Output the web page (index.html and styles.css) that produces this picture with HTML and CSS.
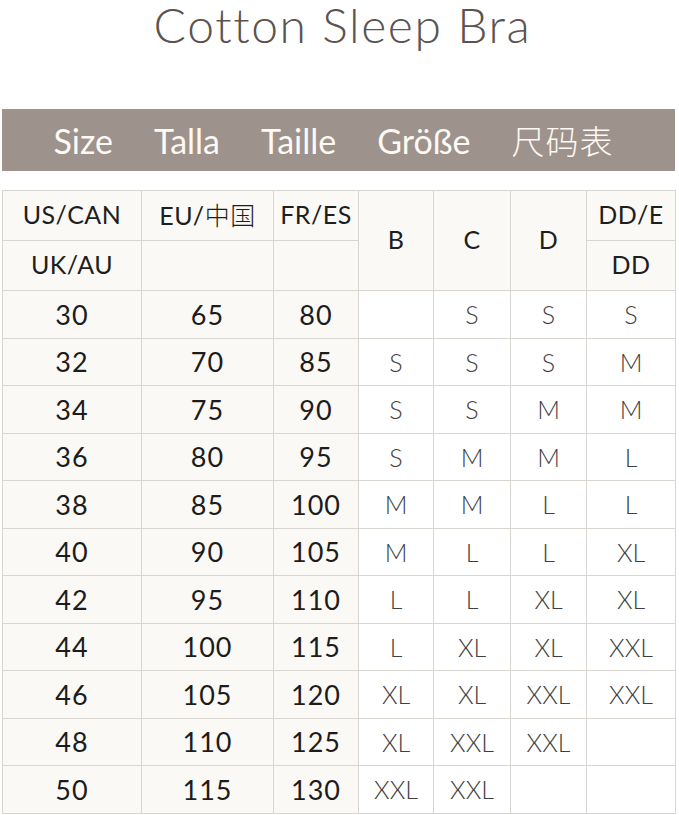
FILE: index.html
```html
<!DOCTYPE html>
<html>
<head>
<meta charset="utf-8">
<link rel="stylesheet" href="styles.css">
</head>
<body>
<div class="page">
  <h1 class="title">Cotton Sleep Bra</h1>
  <div class="banner">
    <span>Size</span><span>Talla</span><span>Taille</span><span>Größe</span><span class="cjk">尺码表</span>
  </div>
  <table class="chart">
    <colgroup>
      <col class="c1"><col class="c2"><col class="c3"><col class="c4"><col class="c5"><col class="c6"><col class="c7">
    </colgroup>
    <thead>
      <tr class="h">
        <th>US/CAN</th><th>EU/<span class="cjk">中国</span></th><th>FR/ES</th>
        <th rowspan="2">B</th><th rowspan="2">C</th><th rowspan="2">D</th><th>DD/E</th>
      </tr>
      <tr class="h">
        <th>UK/AU</th><th></th><th></th><th>DD</th>
      </tr>
    </thead>
    <tbody>
      <tr><td class="n">30</td><td class="n">65</td><td class="n">80</td><td></td><td>S</td><td>S</td><td>S</td></tr>
      <tr><td class="n">32</td><td class="n">70</td><td class="n">85</td><td>S</td><td>S</td><td>S</td><td>M</td></tr>
      <tr><td class="n">34</td><td class="n">75</td><td class="n">90</td><td>S</td><td>S</td><td>M</td><td>M</td></tr>
      <tr><td class="n">36</td><td class="n">80</td><td class="n">95</td><td>S</td><td>M</td><td>M</td><td>L</td></tr>
      <tr><td class="n">38</td><td class="n">85</td><td class="n">100</td><td>M</td><td>M</td><td>L</td><td>L</td></tr>
      <tr><td class="n">40</td><td class="n">90</td><td class="n">105</td><td>M</td><td>L</td><td>L</td><td>XL</td></tr>
      <tr><td class="n">42</td><td class="n">95</td><td class="n">110</td><td>L</td><td>L</td><td>XL</td><td>XL</td></tr>
      <tr><td class="n">44</td><td class="n">100</td><td class="n">115</td><td>L</td><td>XL</td><td>XL</td><td>XXL</td></tr>
      <tr><td class="n">46</td><td class="n">105</td><td class="n">120</td><td>XL</td><td>XL</td><td>XXL</td><td>XXL</td></tr>
      <tr><td class="n">48</td><td class="n">110</td><td class="n">125</td><td>XL</td><td>XXL</td><td>XXL</td><td></td></tr>
      <tr><td class="n">50</td><td class="n">115</td><td class="n">130</td><td>XXL</td><td>XXL</td><td></td><td></td></tr>
    </tbody>
  </table>
</div>
</body>
</html>
```

FILE: styles.css
```css
html, body {
  margin: 0;
  padding: 0;
  background: #ffffff;
}
.page {
  width: 679px;
  height: 815px;
  overflow: hidden;
  padding: 0 4px 0 2px;
  box-sizing: border-box;
  font-family: Lato, "Noto Sans", "Noto Sans CJK SC", sans-serif;
}
.title {
  margin: 0;
  height: 109px;
  text-align: center;
  font-family: Lato, "Noto Sans", sans-serif;
  font-weight: 300;
  font-size: 48px;
  line-height: 50px;
  color: #5b5350;
  letter-spacing: 1.6px;
  padding-left: 8px;
  box-sizing: border-box;
}
.banner {
  height: 62px;
  background: #9e928c;
  color: #fdf9f4;
  display: flex;
  align-items: center;
  justify-content: center;
  gap: 41px;
  font-size: 34px;
  font-weight: 400;
  font-family: Lato, "Noto Sans CJK SC", sans-serif;
  padding-right: 10px;
  box-sizing: border-box;
}
.banner .cjk {
  font-family: "Noto Sans CJK SC", sans-serif;
  font-weight: 300;
  font-size: 33px;
  letter-spacing: 1px;
}
.cjk {
  font-family: "Noto Sans CJK SC", sans-serif;
  font-weight: 300;
}
.chart {
  margin-top: 19px;
  width: 673px;
  border-collapse: collapse;
  table-layout: fixed;
  border: 1px solid #cfccc8;
}
.c1 { width: 139px; }
.c2 { width: 132px; }
.c3 { width: 85px; }
.c4 { width: 75px; }
.c5 { width: 77px; }
.c6 { width: 76px; }
.c7 { width: 89px; }
.chart th, .chart td {
  border: 1px solid #d9d6d2;
  text-align: center;
  padding: 0;
}
.chart th {
  background: #fbf9f5;
  height: 45px;
  font-weight: 400;
  font-size: 25px;
  color: #1e1e1e;
  letter-spacing: 0.5px;
  padding-bottom: 4px;
}
.chart td {
  height: 46.5px;
  font-size: 25px;
  font-weight: 300;
  color: #3e3e3e;
  background: #ffffff;
}
.chart td.n {
  background: #fbf9f5;
  font-weight: 400;
  font-size: 27px;
  color: #1c1c1c;
  letter-spacing: 1px;
}
```
